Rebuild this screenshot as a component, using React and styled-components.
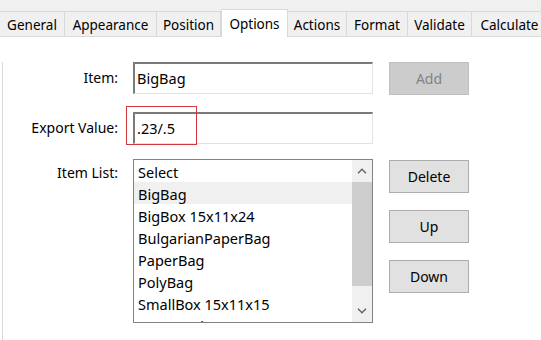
import React from 'react'
import styled, { createGlobalStyle } from 'styled-components'

const GlobalStyle = createGlobalStyle`
  html, body {
    margin: 0;
    padding: 0;
    background: #ffffff;
  }
  body {
    font-family: 'Noto Sans', 'Open Sans', sans-serif;
    font-size: 13px;
    color: #000;
  }
`

const tabs = [
  { name: 'General', width: 65 },
  { name: 'Appearance', width: 92 },
  { name: 'Position', width: 64 },
  { name: 'Options', width: 67 },
  { name: 'Actions', width: 59 },
  { name: 'Format', width: 61 },
  { name: 'Validate', width: 64 },
  { name: 'Calculate', width: 76 }
]

const items = [
  'Select',
  'BigBag',
  'BigBox 15x11x24',
  'BulgarianPaperBag',
  'PaperBag',
  'PolyBag',
  'SmallBox 15x11x15',
  'StoneSack'
]

const App = () => {
  return (
    <Page>
      <GlobalStyle />
      <TabStrip>
        {tabs.map(t => (
          <Tab key={t.name} width={t.width} active={t.name === 'Options'}>
            {t.name}
          </Tab>
        ))}
      </TabStrip>

      <Panel>
        <Row top={25}>
          <Label>Item:</Label>
          <Field>
            <TextBox>BigBag</TextBox>
          </Field>
          <Button disabled>Add</Button>
        </Row>

        <Row top={17}>
          <Label>Export Value:</Label>
          <Field>
            <TextBox>.23/.5</TextBox>
            <Highlight />
          </Field>
        </Row>

        <Row top={15}>
          <Label tall>Item List:</Label>
          <ListBox>
            <ListItems>
              {items.map(i => (
                <ListItem key={i} selected={i === 'BigBag'}>
                  {i}
                </ListItem>
              ))}
            </ListItems>
            <ScrollBar>
              <Arrow>
                <svg width='10' height='6' viewBox='0 0 10 6'>
                  <path d='M1 5.2 L5 1.2 L9 5.2' fill='none' stroke='#606060' strokeWidth='1.3' />
                </svg>
              </Arrow>
              <Track>
                <Thumb />
              </Track>
              <Arrow>
                <svg width='10' height='6' viewBox='0 0 10 6'>
                  <path d='M1 0.8 L5 4.8 L9 0.8' fill='none' stroke='#606060' strokeWidth='1.3' />
                </svg>
              </Arrow>
            </ScrollBar>
          </ListBox>
          <ButtonColumn>
            <Button>Delete</Button>
            <Button>Up</Button>
            <Button>Down</Button>
          </ButtonColumn>
        </Row>
      </Panel>
    </Page>
  )
}

export default App

const Page = styled.div`
  width: 541px;
  height: 340px;
  overflow: hidden;
  background: #ffffff;
`

const TabStrip = styled.div`
  display: flex;
  align-items: flex-end;
  height: 37px;
  background: #f0f0f0;
  border-bottom: 1px solid #d9d9d9;
  box-sizing: border-box;
  white-space: nowrap;
`

const Tab = styled.div`
  box-sizing: border-box;
  width: ${p => p.width}px;
  height: ${p => (p.active ? '28px' : '25px')};
  margin-bottom: ${p => (p.active ? '-1px' : '0')};
  padding-top: ${p => (p.active ? '4px' : '3px')};
  text-align: center;
  background: ${p => (p.active ? '#ffffff' : '#f0f0f0')};
  border-top: 1px solid #d9d9d9;
  border-right: 1px solid #d9d9d9;
  border-left: ${p => (p.active ? '1px solid #d9d9d9' : '0')};
  color: #000;
  font-size: 13.5px;
  line-height: 20px;
  flex-shrink: 0;
`

const Panel = styled.div`
  margin-left: 2px;
  border-left: 1px solid #d9d9d9;
  height: 303px;
  box-sizing: border-box;
`

const Row = styled.div`
  display: flex;
  align-items: flex-start;
  margin-top: ${p => p.top}px;
`

const Label = styled.div`
  width: 115px;
  margin-right: 15px;
  text-align: right;
  font-size: 14px;
  line-height: 20px;
  padding-top: ${p => (p.tall ? '4px' : '6px')};
  flex-shrink: 0;
`

const Field = styled.div`
  position: relative;
  width: 240px;
  margin-right: 16px;
`

const TextBox = styled.div`
  box-sizing: border-box;
  height: 32px;
  border: 1px solid #e3e3e3;
  border-top: 2px solid #7a7a7a;
  border-left: 2px solid #7a7a7a;
  padding: 4px 2px;
  font-size: 14.5px;
  line-height: 20px;
`

const Highlight = styled.div`
  position: absolute;
  left: -7px;
  top: -6px;
  width: 71px;
  height: 39px;
  box-sizing: border-box;
  border: 1px solid #d0383c;
  pointer-events: none;
`

const Button = styled.div`
  box-sizing: border-box;
  width: 80px;
  height: 33px;
  display: flex;
  align-items: center;
  justify-content: center;
  background: ${p => (p.disabled ? '#cccccc' : '#e1e1e1')};
  border: 1px solid ${p => (p.disabled ? '#bfbfbf' : '#adadad')};
  color: ${p => (p.disabled ? '#838383' : '#000')};
  font-size: 14px;
`

const ButtonColumn = styled.div`
  display: flex;
  flex-direction: column;
  gap: 17px;
  margin-top: 1px;
`

const ListBox = styled.div`
  box-sizing: border-box;
  width: 240px;
  height: 164px;
  margin-right: 16px;
  border: 1px solid #828282;
  display: flex;
  overflow: hidden;
`

const ListItems = styled.div`
  flex: 1;
  overflow: hidden;
`

const ListItem = styled.div`
  box-sizing: border-box;
  height: 22px;
  padding: 2px 0 0 4px;
  line-height: 20px;
  font-size: 14.5px;
  background: ${p => (p.selected ? '#f0f0f0' : 'transparent')};
  white-space: nowrap;
`

const ScrollBar = styled.div`
  width: 20px;
  background: #f0f0f0;
  display: flex;
  flex-direction: column;
`

const Arrow = styled.div`
  height: 22px;
  display: flex;
  align-items: center;
  justify-content: center;
  flex-shrink: 0;
`

const Track = styled.div`
  flex: 1;
`

const Thumb = styled.div`
  height: 104px;
  background: #cdcdcd;
`
